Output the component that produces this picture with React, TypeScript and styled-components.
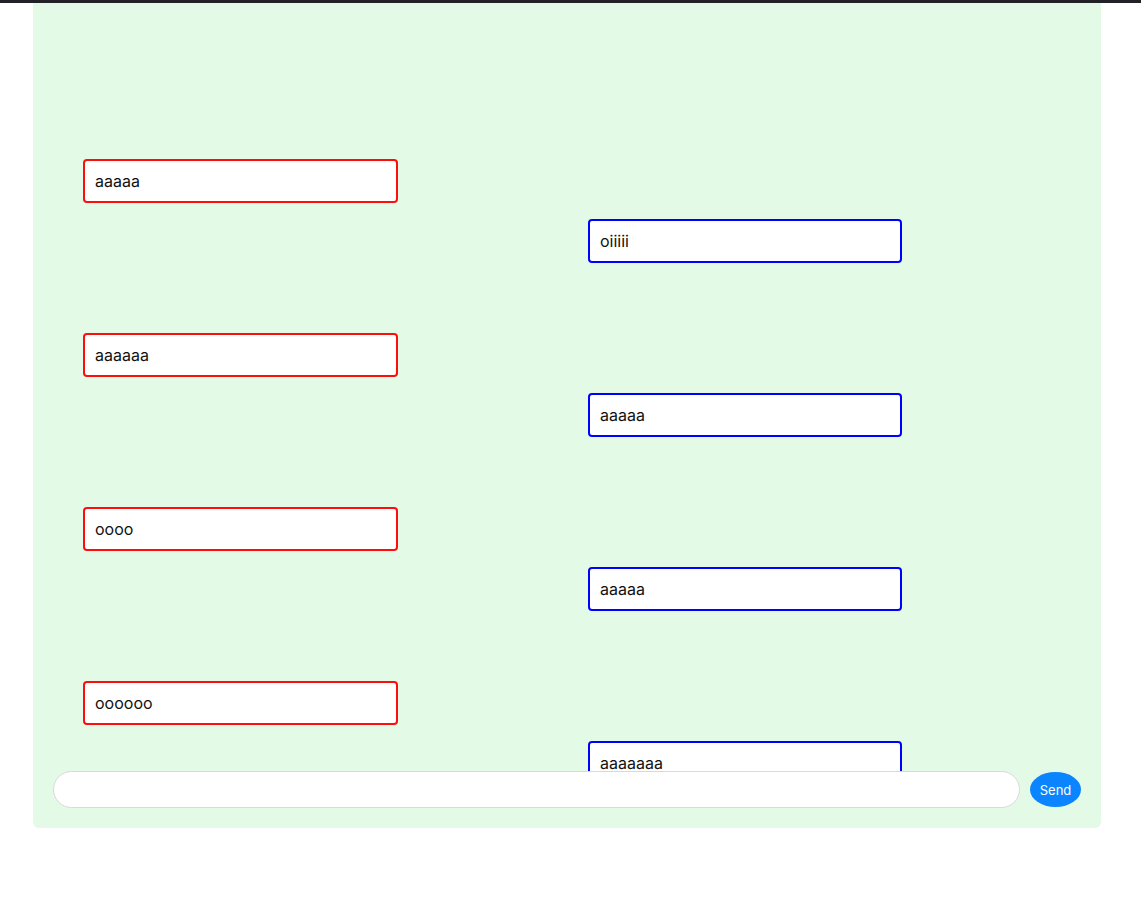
import React from "react";
import styled, { createGlobalStyle } from "styled-components";

const GlobalStyle = createGlobalStyle`
  html, body { margin: 0; padding: 0; background: #ffffff; }
  body { font-family: Inter, "Noto Sans", sans-serif; }
`;

const TopBar = styled.div`
  height: 3px;
  background: #222226;
`;

const Panel = styled.div`
  margin-left: 33px;
  width: 1068px;
  height: 825px;
  box-sizing: border-box;
  background: #e3fae6;
  border-radius: 0 0 6px 6px;
  display: flex;
  flex-direction: column;
  padding: 0 20px 20px;
`;

const MessageList = styled.div`
  flex: 1;
  min-height: 0;
  overflow: hidden;
  display: flex;
  flex-direction: column;
  padding: 86px 0 0 30px;
`;

const Message = styled.div<{ $side: "left" | "right" }>`
  flex: none;
  width: ${(p) => (p.$side === "left" ? "315px" : "314px")};
  height: 44px;
  box-sizing: border-box;
  border: 2px solid ${(p) => (p.$side === "left" ? "#ff0d0d" : "#0000ff")};
  border-radius: 4px;
  background: #ffffff;
  padding: 0 10px;
  display: flex;
  align-items: center;
  font-size: 16px;
  color: #111;
  margin-top: ${(p) => (p.$side === "left" ? "70px" : "16px")};
  margin-left: ${(p) => (p.$side === "left" ? "0" : "505px")};
`;

const InputRow = styled.div`
  display: flex;
  align-items: center;
  gap: 10px;
  height: 37px;
`;

const TextInput = styled.input`
  flex: 1;
  height: 37px;
  box-sizing: border-box;
  border: 1px solid #d9d9d9;
  border-radius: 19px;
  background: #ffffff;
  padding: 0 16px;
  font-size: 14px;
  outline: none;
`;

const SendButton = styled.button`
  width: 51px;
  height: 35px;
  border: none;
  border-radius: 50%;
  background: #0a84ff;
  color: #ffffff;
  font-family: Inter, "Noto Sans", sans-serif;
  font-size: 13px;
  padding: 0;
  cursor: pointer;
`;

const messages: { side: "left" | "right"; text: string }[] = [
  { side: "left", text: "aaaaa" },
  { side: "right", text: "oiiiii" },
  { side: "left", text: "aaaaaa" },
  { side: "right", text: "aaaaa" },
  { side: "left", text: "oooo" },
  { side: "right", text: "aaaaa" },
  { side: "left", text: "oooooo" },
  { side: "right", text: "aaaaaaa" },
];

export default function App() {
  return (
    <>
      <GlobalStyle />
      <TopBar />
      <Panel>
        <MessageList>
          {messages.map((m, i) => (
            <Message key={i} $side={m.side}>
              {m.text}
            </Message>
          ))}
        </MessageList>
        <InputRow>
          <TextInput />
          <SendButton>Send</SendButton>
        </InputRow>
      </Panel>
    </>
  );
}
